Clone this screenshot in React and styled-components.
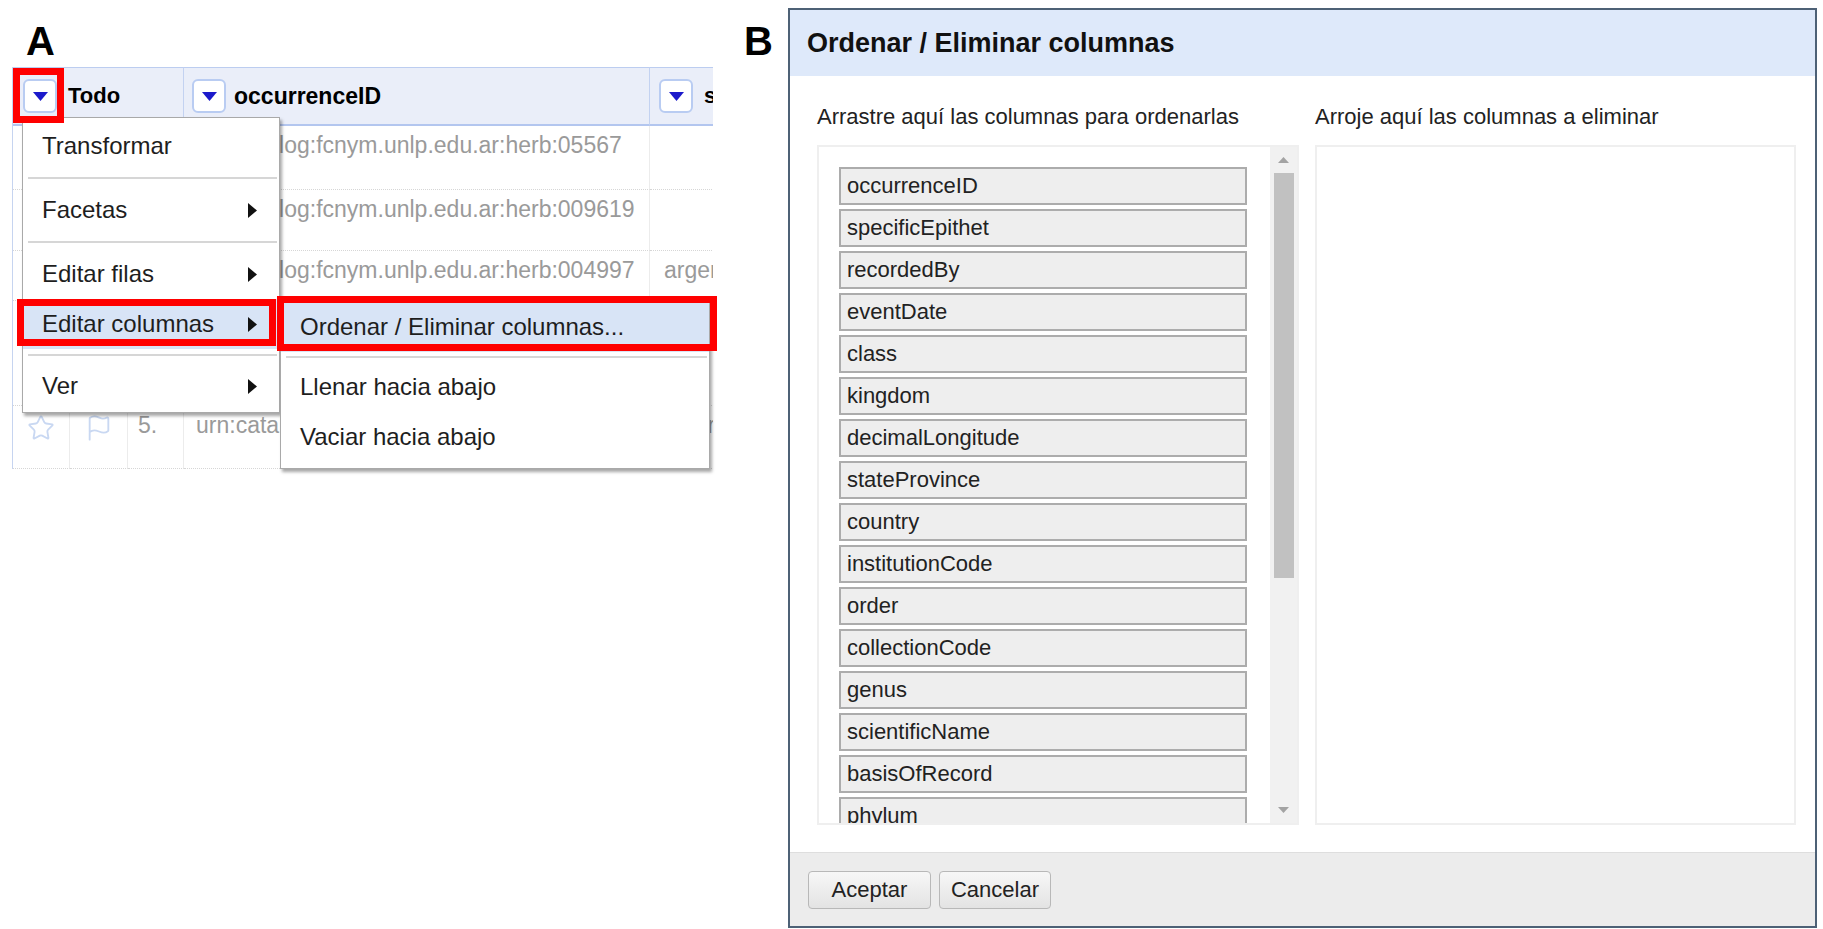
import React from 'react';
import styled, { createGlobalStyle } from 'styled-components';
import { Star, Flag } from 'lucide-react';

const GlobalStyle = createGlobalStyle`
  html, body {
    margin: 0;
    padding: 0;
    background: #fff;
  }
  body {
    font-family: 'Liberation Sans', Arial, sans-serif;
    color: #222;
  }
`;

const Page = styled.div`
  display: flex;
  align-items: flex-start;
  width: 1823px;
  height: 929px;
  overflow: hidden;
`;

const LeftPanel = styled.section`
  width: 744px;
  padding-left: 12px;
  box-sizing: border-box;
`;

const RightPanel = styled.section`
  display: flex;
  align-items: flex-start;
`;

const PanelLabel = styled.div`
  font: bold 40px/40px 'Liberation Sans', Arial, sans-serif;
  color: #000;
  width: ${({ $w }) => $w || 'auto'};
  margin: 21px 0 6px ${({ $indent }) => $indent || 0}px;
`;

/* ---------- panel A : grid + context menu ---------- */

const TableArea = styled.div`
  position: relative;
  width: 701px;
`;

const Table = styled.div`
  width: 701px;
  overflow: hidden;
  display: grid;
  grid-template-columns: 57px 58px 56px 466px 90px;
  grid-template-rows: 59px 64px 61px 50px 105px 63px;
  border-left: 1px solid #c6d4f0;
  box-sizing: border-box;
`;

const HeaderCell = styled.div`
  grid-column: span ${({ $span }) => $span || 1};
  display: flex;
  align-items: center;
  gap: ${({ $gap }) => $gap}px;
  padding-left: ${({ $pad }) => $pad}px;
  background: #eaeef9;
  border-top: 1px solid #bccdf0;
  border-bottom: 2px solid #b3c6ef;
  border-right: 1px solid #c3d2f1;
  font: bold 22px 'Liberation Sans', Arial, sans-serif;
  color: #000;
  white-space: nowrap;
  overflow: hidden;
  box-sizing: border-box;
`;

const DropButton = styled.div`
  flex: none;
  width: 34px;
  height: 34px;
  box-sizing: border-box;
  border: 2px solid #b9ccf2;
  border-radius: 6px;
  background: #fff;
  display: flex;
  align-items: center;
  justify-content: center;
`;

const BodyCell = styled.div`
  padding: 6px ${({ $pad }) => ($pad === undefined ? 11 : $pad)}px 0;
  font: 23px/26px 'Liberation Sans', Arial, sans-serif;
  color: #9a9a9a;
  white-space: nowrap;
  overflow: hidden;
  border-bottom: 1px dotted #d6d6d6;
  border-right: 1px solid #ececec;
  display: flex;
  justify-content: ${({ $center }) => ($center ? 'center' : 'flex-start')};
  align-items: flex-start;
  box-sizing: border-box;
`;

const IconSlot = styled.div`
  padding-top: 2px;
  color: #c9d8f2;
  display: flex;
`;

const Menu = styled.div`
  position: absolute;
  left: ${({ $x }) => $x}px;
  top: ${({ $y }) => $y}px;
  width: ${({ $w }) => $w}px;
  padding: ${({ $padTop }) => $padTop}px 0 ${({ $padBottom }) => $padBottom}px;
  background: #fff;
  border: 1px solid #a9a9a9;
  box-shadow: 2px 3px 3px rgba(0, 0, 0, 0.35);
  box-sizing: border-box;
  z-index: 2;
`;

const MenuItem = styled.div`
  height: 50px;
  display: flex;
  align-items: center;
  justify-content: space-between;
  padding: 0 22px 0 19px;
  font: 24px 'Liberation Sans', Arial, sans-serif;
  color: #1e1e1e;
  background: ${({ $active }) => ($active ? '#d8e4f6' : 'transparent')};
  white-space: nowrap;
`;

const MenuSeparator = styled.div`
  height: 2px;
  margin: ${({ $gap }) => $gap}px 2px ${({ $gap }) => $gap}px 5px;
  background: #d6d6d6;
`;

const Highlight = styled.div`
  position: absolute;
  left: ${({ $x }) => $x}px;
  top: ${({ $y }) => $y}px;
  width: ${({ $w }) => $w}px;
  height: ${({ $h }) => $h}px;
  border: 7px solid #ff0000;
  box-sizing: border-box;
  z-index: 3;
  pointer-events: none;
`;

/* ---------- panel B : dialog ---------- */

const Dialog = styled.div`
  margin-top: 8px;
  width: 1029px;
  height: 920px;
  box-sizing: border-box;
  border: 2px solid #4d6176;
  background: #fff;
  display: flex;
  flex-direction: column;
`;

const DialogHeader = styled.div`
  flex: none;
  height: 66px;
  display: flex;
  align-items: center;
  padding-left: 17px;
  background: #dee9fa;
  font: bold 27px 'Liberation Sans', Arial, sans-serif;
  color: #111;
`;

const DialogBody = styled.div`
  flex: 1;
  display: grid;
  grid-template-columns: 482px 481px;
  column-gap: 16px;
  padding: 28px 0 0 27px;
`;

const Column = styled.div`
  display: flex;
  flex-direction: column;
`;

const ColumnLabel = styled.div`
  font: 22px/26px 'Liberation Sans', Arial, sans-serif;
  color: #222;
  margin-bottom: 15px;
`;

const ListBox = styled.div`
  height: 680px;
  box-sizing: border-box;
  border: 2px solid #efefef;
  display: flex;
  background: #fff;
`;

const Viewport = styled.div`
  flex: 1;
  overflow: hidden;
  padding: 20px 23px 0 20px;
`;

const ColumnChip = styled.div`
  height: 38px;
  box-sizing: border-box;
  margin-bottom: 4px;
  padding-left: 6px;
  border: 2px solid #acacac;
  background: #eeeeee;
  font: 22px/34px 'Liberation Sans', Arial, sans-serif;
  color: #222;
  white-space: nowrap;
`;

const ScrollTrack = styled.div`
  flex: none;
  width: 27px;
  background: #f1f1f1;
  display: flex;
  flex-direction: column;
  align-items: center;
`;

const ScrollArrow = styled.div`
  height: ${({ $h }) => $h}px;
  display: flex;
  align-items: center;
  justify-content: center;
`;

const ScrollThumb = styled.div`
  margin-top: 1px;
  width: 20px;
  height: 405px;
  background: #c1c1c1;
`;

const Spacer = styled.div`
  flex: 1;
`;

const DialogFooter = styled.div`
  flex: none;
  height: 74px;
  box-sizing: border-box;
  display: flex;
  align-items: center;
  gap: 8px;
  padding-left: 18px;
  background: #ececec;
  border-top: 1px solid #dedede;
`;

const Button = styled.button`
  width: ${({ $w }) => $w}px;
  height: 38px;
  padding: 0;
  border: 1px solid #b8b8b8;
  border-radius: 4px;
  background: linear-gradient(#f7f7f7, #e3e3e3);
  font: 22px 'Liberation Sans', Arial, sans-serif;
  color: #222;
`;

const DownTriangle = () => (
  <svg width="15" height="9" viewBox="0 0 15 9">
    <polygon points="0,0 15,0 7.5,9" fill="#1c1acb" />
  </svg>
);

const RightTriangle = () => (
  <svg width="9" height="15" viewBox="0 0 9 15">
    <polygon points="0,0 9,7.5 0,15" fill="#111" />
  </svg>
);

const ScrollArrowIcon = ({ up }) => (
  <svg width="11" height="6" viewBox="0 0 11 6">
    <polygon points={up ? '0,6 11,6 5.5,0' : '0,0 11,0 5.5,6'} fill="#a3a3a3" />
  </svg>
);

const rows = [
  { n: '1.', id: 'urn:catalog:fcnym.unlp.edu.ar:herb:05567', ep: '' },
  { n: '2.', id: 'urn:catalog:fcnym.unlp.edu.ar:herb:009619', ep: '' },
  { n: '3.', id: 'urn:catalog:fcnym.unlp.edu.ar:herb:004997', ep: 'argentina' },
  { n: '4.', id: 'urn:catalog:fcnym.unlp.edu.ar:herb:003412', ep: 'bonariensis' },
  { n: '5.', id: 'urn:catalog:fcnym.unlp.edu.ar:herb:001283', ep: 'australis' },
];

const columns = [
  'occurrenceID',
  'specificEpithet',
  'recordedBy',
  'eventDate',
  'class',
  'kingdom',
  'decimalLongitude',
  'stateProvince',
  'country',
  'institutionCode',
  'order',
  'collectionCode',
  'genus',
  'scientificName',
  'basisOfRecord',
  'phylum',
  'family',
  'decimalLatitude',
  'locality',
  'catalogNumber',
];

function DataGrid() {
  return (
    <TableArea>
      <Table>
        <HeaderCell $span={3} $pad={10} $gap={11}>
          <DropButton>
            <DownTriangle />
          </DropButton>
          Todo
        </HeaderCell>
        <HeaderCell $pad={8} $gap={8} style={{ fontSize: 23 }}>
          <DropButton>
            <DownTriangle />
          </DropButton>
          occurrenceID
        </HeaderCell>
        <HeaderCell $pad={9} $gap={11}>
          <DropButton>
            <DownTriangle />
          </DropButton>
          specificEpithet
        </HeaderCell>

        {rows.map((row) => (
          <React.Fragment key={row.n}>
            <BodyCell $center $pad={0}>
              <IconSlot>
                <Star size={28} strokeWidth={1.6} />
              </IconSlot>
            </BodyCell>
            <BodyCell $center $pad={0}>
              <IconSlot>
                <Flag size={28} strokeWidth={1.6} />
              </IconSlot>
            </BodyCell>
            <BodyCell $pad={10}>{row.n}</BodyCell>
            <BodyCell $pad={12}>{row.id}</BodyCell>
            <BodyCell $pad={14}>{row.ep}</BodyCell>
          </React.Fragment>
        ))}
      </Table>

      <Menu $x={10} $y={50} $w={258} $padTop={3} $padBottom={1}>
        <MenuItem>Transformar</MenuItem>
        <MenuSeparator $gap={6} />
        <MenuItem>
          Facetas <RightTriangle />
        </MenuItem>
        <MenuSeparator $gap={6} />
        <MenuItem>
          Editar filas <RightTriangle />
        </MenuItem>
        <MenuItem $active>
          Editar columnas <RightTriangle />
        </MenuItem>
        <MenuSeparator $gap={5} />
        <MenuItem>
          Ver <RightTriangle />
        </MenuItem>
      </Menu>

      <Menu $x={268} $y={233} $w={430} $padTop={1} $padBottom={6}>
        <MenuItem $active>Ordenar / Eliminar columnas...</MenuItem>
        <MenuSeparator $gap={4} />
        <MenuItem>Llenar hacia abajo</MenuItem>
        <MenuItem>Vaciar hacia abajo</MenuItem>
      </Menu>

      <Highlight $x={1} $y={1} $w={51} $h={55} />
      <Highlight $x={5} $y={232} $w={259} $h={47} />
      <Highlight $x={265} $y={229} $w={440} $h={55} />
    </TableArea>
  );
}

function ReorderDialog() {
  return (
    <Dialog>
      <DialogHeader>Ordenar / Eliminar columnas</DialogHeader>
      <DialogBody>
        <Column>
          <ColumnLabel>Arrastre aquí las columnas para ordenarlas</ColumnLabel>
          <ListBox>
            <Viewport>
              {columns.map((name) => (
                <ColumnChip key={name}>{name}</ColumnChip>
              ))}
            </Viewport>
            <ScrollTrack>
              <ScrollArrow $h={25}>
                <ScrollArrowIcon up />
              </ScrollArrow>
              <ScrollThumb />
              <Spacer />
              <ScrollArrow $h={26}>
                <ScrollArrowIcon />
              </ScrollArrow>
            </ScrollTrack>
          </ListBox>
        </Column>
        <Column>
          <ColumnLabel>Arroje aquí las columnas a eliminar</ColumnLabel>
          <ListBox />
        </Column>
      </DialogBody>
      <DialogFooter>
        <Button $w={123}>Aceptar</Button>
        <Button $w={112}>Cancelar</Button>
      </DialogFooter>
    </Dialog>
  );
}

export default function App() {
  return (
    <>
      <GlobalStyle />
      <Page>
        <LeftPanel>
          <PanelLabel $indent={14}>A</PanelLabel>
          <DataGrid />
        </LeftPanel>
        <RightPanel>
          <PanelLabel $w="44px">B</PanelLabel>
          <ReorderDialog />
        </RightPanel>
      </Page>
    </>
  );
}
